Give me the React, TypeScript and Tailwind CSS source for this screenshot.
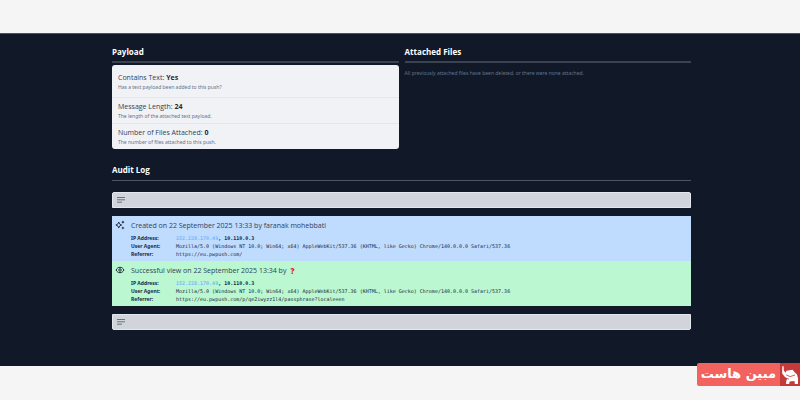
import type { ReactNode } from 'react';

const payload = [
  { label: 'Contains Text:', value: 'Yes', hint: 'Has a text payload been added to this push?' },
  { label: 'Message Length:', value: '24', hint: 'The length of the attached text payload.' },
  { label: 'Number of Files Attached:', value: '0', hint: 'The number of files attached to this push.' },
];

const userAgent =
  'Mozilla/5.0 (Windows NT 10.0; Win64; x64) AppleWebKit/537.36 (KHTML, like Gecko) Chrome/140.0.0.0 Safari/537.36';

function SparkleIcon() {
  return (
    <svg viewBox="0 0 24 24" className="size-[10px]" fill="#1e293b" aria-hidden="true">
      <path d="M9 5l2.200 4.800L16 12l-4.800 2.200L9 19l-2.200-4.800L2 12l4.800-2.200z" fill="none" stroke="#1e293b" strokeWidth="2.200" strokeLinejoin="round" />
      <path d="M19 1l1.300 2.700L23 5l-2.700 1.300L19 9l-1.300-2.700L15 5l2.700-1.300z" />
      <path d="M19 15l1.300 2.700L23 19l-2.700 1.300L19 23l-1.300-2.700L15 19l2.700-1.300z" />
    </svg>
  );
}

function EyeIcon() {
  return (
    <svg viewBox="0 0 24 24" className="size-[10px]" fill="none" stroke="#1e293b" strokeWidth="2.400" strokeLinejoin="round" aria-hidden="true">
      <path d="M2.500 12c2-4.200 5.500-6.500 9.500-6.500s7.500 2.300 9.500 6.500c-2 4.200-5.500 6.500-9.500 6.500s-7.500-2.300-9.500-6.500z" />
      <circle cx="12" cy="12" r="3" />
    </svg>
  );
}

function ElephantIcon() {
  return (
    <svg viewBox="0 0 20 22" className="h-[22px] w-5" fill="#fff" aria-hidden="true">
      <path d="M2.200 2.500 3.600 2 3.800 6.500 5.500 8.800 6.500 6.800 12.500 5.800 14.500 8 17 10.500 18 14.500 18 20H14.800L14.500 17 9.500 17.400 9.300 20H6L6.300 16.800 7.300 14.500 4.700 12.800 2.200 9.500z" />
      <path d="M6.200 10.800 10 12.600 15 11M9 15.200 6.500 14.300" fill="none" stroke="#c43a3b" strokeWidth=".8" />
    </svg>
  );
}

function LogBar({ rounded }: { rounded: string }) {
  return (
    <div className={`flex h-4 items-center border border-slate-200 bg-[#d1d5db] px-1 ${rounded}`}>
      <svg viewBox="0 0 8 6" className="h-[6px] w-2" fill="none" stroke="#5d6676" aria-hidden="true">
        <path d="M0 .5h8M0 2.800h8M0 5.200h5" strokeWidth=".9" />
      </svg>
    </div>
  );
}

type EntryProps = {
  icon: ReactNode;
  title: ReactNode;
  referrer: string;
  tone: string;
};

function LogEntry({ icon, title, referrer, tone }: EntryProps) {
  return (
    <li className={`flex gap-[6px] pt-1 pb-[3px] pl-[3px] ${tone}`}>
      <span className="flex h-[10px] w-[10px] shrink-0">{icon}</span>
      <div className="min-w-0 pt-px">
        <p className="flex h-[10px] items-center text-[7px] leading-[10px] text-slate-700">{title}</p>
        <dl className="mt-[3px] grid grid-cols-[45px_auto] text-[5px] leading-2 text-slate-800">
          <dt className="font-['Noto_Sans',sans-serif] font-bold">IP Address:</dt>
          <dd className="font-['DejaVu_Sans_Mono',monospace] font-bold">
            <a href="#ip" className="text-[#7cb8f8]">152.228.170.49</a>, 10.110.0.3
          </dd>
          <dt className="font-['Noto_Sans',sans-serif] font-bold">User Agent:</dt>
          <dd className="font-['DejaVu_Sans_Mono',monospace]">{userAgent}</dd>
          <dt className="font-['Noto_Sans',sans-serif] font-bold">Referrer:</dt>
          <dd className="font-['DejaVu_Sans_Mono',monospace]">{referrer}</dd>
        </dl>
      </div>
    </li>
  );
}

export default function App() {
  return (
    <div className="relative min-h-screen bg-[#f5f5f5] py-[33px] font-['Open_Sans',sans-serif]">
      <main className="border-t border-[#4b5260] bg-[#111827] pt-3 pr-[13.6%] pb-9 pl-[14%]">
        <div className="grid grid-cols-2 gap-[6px]">
          <section>
            <h2 className="border-b-2 border-[#3b4353] pb-1 text-[8px] leading-[11px] font-bold text-white">Payload</h2>
            <ul className="mt-[2px] divide-y divide-gray-200 rounded-[3px] bg-[#f0f2f6] pt-1">
              {payload.map((row) => (
                <li key={row.label} className="px-[6px] pt-1 pb-[2px] first:pb-[5px]">
                  <p className="text-[7px] leading-[10px] text-slate-700">
                    {row.label} <strong className="text-slate-800">{row.value}</strong>
                  </p>
                  <p className="font-['Noto_Sans',sans-serif] text-[5px] leading-[9px] text-slate-500">{row.hint}</p>
                </li>
              ))}
            </ul>
          </section>

          <section>
            <h2 className="border-b-2 border-[#3b4353] pb-1 text-[8px] leading-[11px] font-bold text-white">Attached Files</h2>
            <p className="mt-[6px] font-['Noto_Sans',sans-serif] text-[5px] leading-[9px] text-slate-500">
              All previously attached files have been deleted, or there were none attached.
            </p>
          </section>
        </div>

        <section>
          <h2 className="mt-[15px] border-b border-gray-600 pb-[5px] text-[8px] leading-[11px] font-bold text-white">Audit Log</h2>
          <div className="mt-[11px] flex flex-col gap-2">
            <LogBar rounded="rounded-t-[2px]" />
            <ul>
              <LogEntry
                icon={<SparkleIcon />}
                title="Created on 22 September 2025 13:33 by faranak mohebbati"
                referrer="https://eu.pwpush.com/"
                tone="bg-[#bfdbfe]"
              />
              <LogEntry
                icon={<EyeIcon />}
                title={
                  <>
                    Successful view on 22 September 2025 13:34 by
                    <span className="ml-1 text-[8px] font-black text-[#e11d48]">?</span>
                  </>
                }
                referrer="https://eu.pwpush.com/p/qe2iwyzz1l4/passphrase?locale=en"
                tone="bg-[#bbf7d0]"
              />
            </ul>
            <LogBar rounded="rounded-b-[2px]" />
          </div>
        </section>
      </main>

      {/* Host badge, pinned over the page edge */}
      <div className="absolute right-0 bottom-[14px] flex h-[23px] rounded-l-[2px] bg-[#f2625e]">
        <span dir="rtl" lang="fa" className="flex items-center justify-center px-1 pb-[2px] font-['DejaVu_Sans',sans-serif] text-[13px] leading-5 font-bold whitespace-nowrap text-white">
          مبین هاست
        </span>
        <span className="flex w-5 items-center bg-[#c43a3b]">
          <ElephantIcon />
        </span>
      </div>
    </div>
  );
}
